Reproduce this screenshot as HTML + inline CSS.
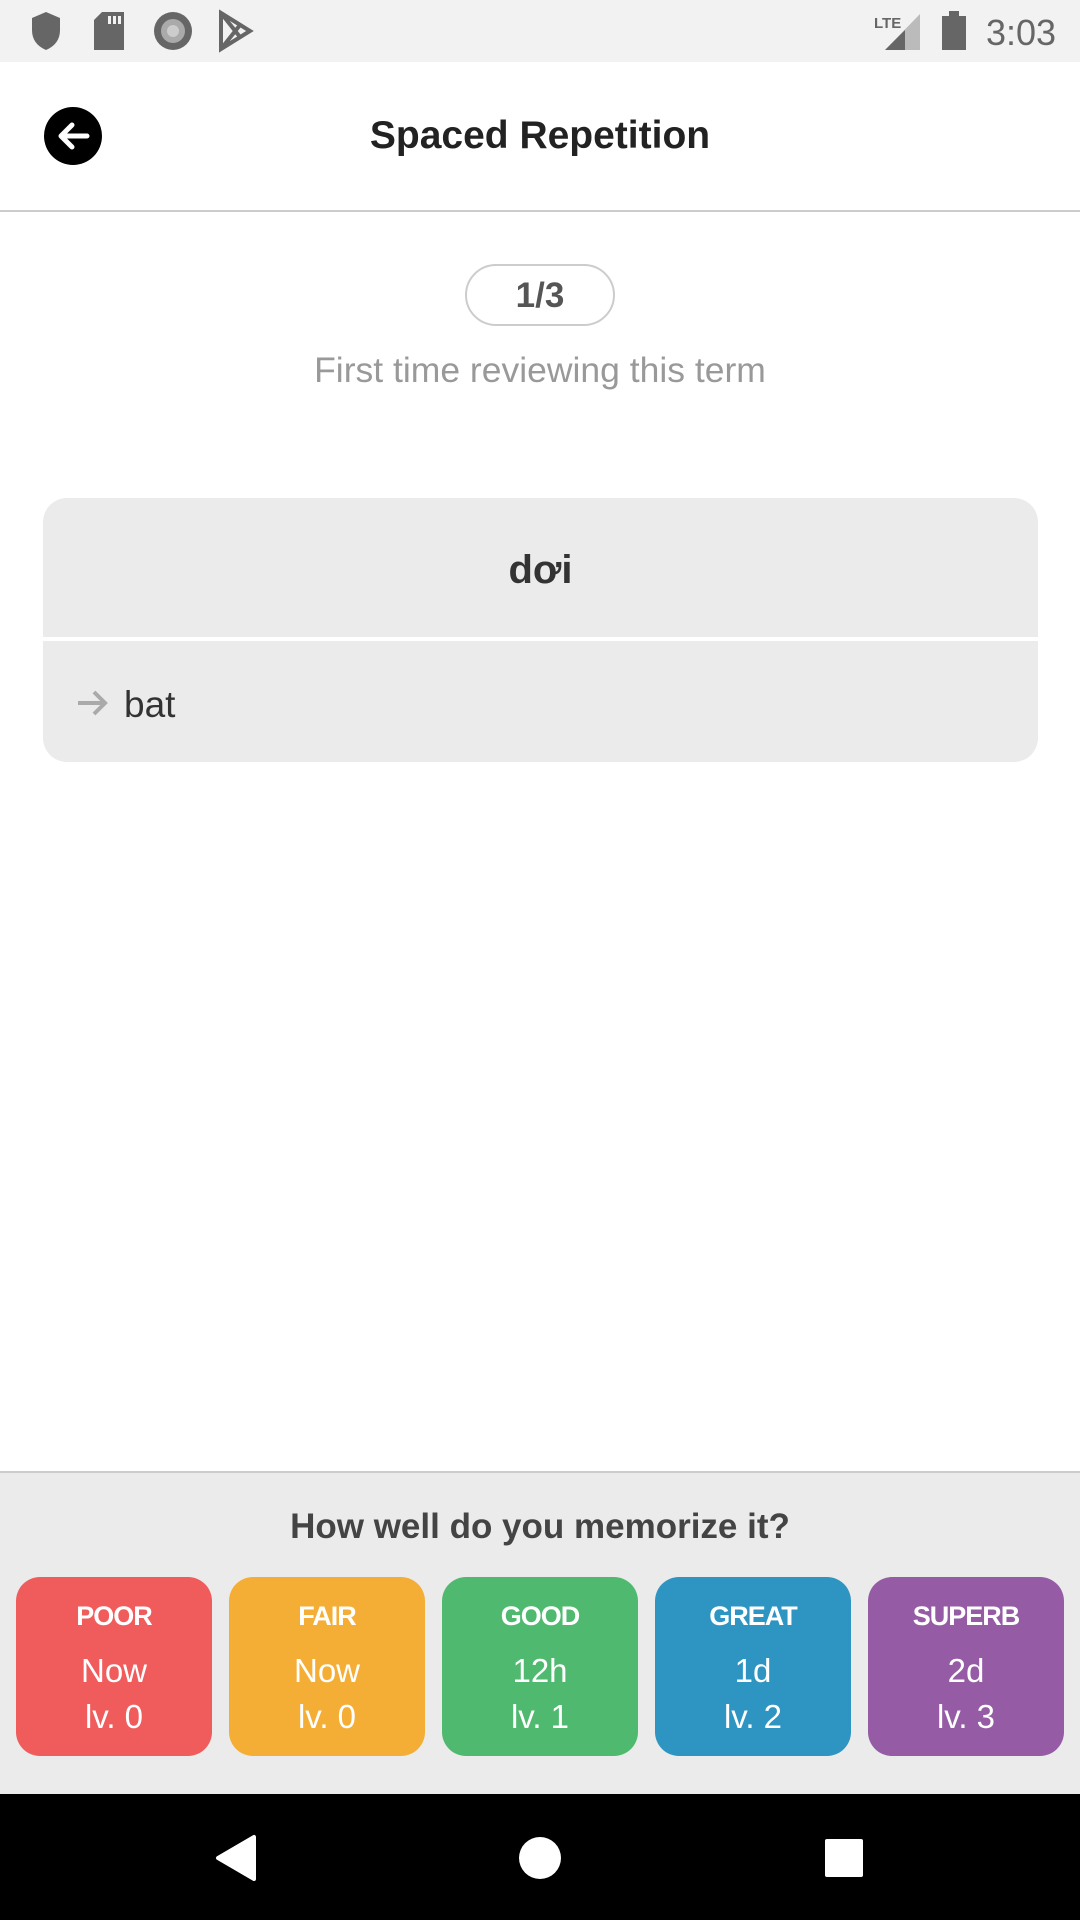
<!DOCTYPE html>
<html><head><meta charset="utf-8"><style>
*{margin:0;padding:0;box-sizing:border-box}
body{width:1080px;height:1920px;position:relative;background:#fff;font-family:"Liberation Sans",Roboto,sans-serif;overflow:hidden}
.abs{position:absolute}
.btn{position:absolute;top:1577px;width:196px;height:179px;border-radius:24px;color:#fff;text-align:center}
.btn .l{position:absolute;top:24px;width:100%;font-weight:bold;font-size:27px;letter-spacing:-1px}
.btn .v{position:absolute;top:75px;width:100%;font-size:33px}
.btn .w{position:absolute;top:121px;width:100%;font-size:33px}
</style></head><body>
<div class="abs" style="left:0;top:0;width:1080px;height:62px;background:#f2f2f2"></div>
<svg class="abs" style="left:0;top:0" width="1080" height="62">
<path d="M32 18 L46 12 L60 18 L60 30 Q60 44 46 50 Q32 44 32 30Z" fill="#666"/>
<path d="M102 12 L124 12 L124 50 L94 50 L94 20Z" fill="#666"/>
<rect x="108" y="16" width="3" height="8" fill="#f2f2f2"/><rect x="113" y="16" width="3" height="8" fill="#f2f2f2"/><rect x="118" y="16" width="3" height="8" fill="#f2f2f2"/>
<circle cx="173" cy="31" r="19" fill="#666"/><circle cx="173" cy="31" r="12" fill="#aaa"/><circle cx="173" cy="31" r="6" fill="#ccc"/>
<path d="M221 13 L250 31 L221 49Z M221 13 L240 37 M221 49 L240 25" fill="none" stroke="#666" stroke-width="4"/>
<path d="M885 50 L920 14 L920 50Z" fill="#bbb"/><path d="M885 50 L905 30 L905 50Z" fill="#666"/>
<text x="874" y="28" font-size="15" font-weight="bold" fill="#666">LTE</text>
<rect x="942" y="16" width="24" height="34" fill="#666"/><rect x="949" y="11" width="10" height="6" fill="#666"/>
<text x="986" y="45" font-size="36" fill="#666">3:03</text>
</svg>
<div class="abs" style="left:0;top:210px;width:1080px;height:2px;background:#ccc"></div>
<svg class="abs" style="left:44px;top:107px" width="58" height="58"><circle cx="29" cy="29" r="29" fill="#000"/><path d="M43 29 H17 M28 18 L17 29 L28 40" stroke="#fff" stroke-width="5" fill="none" stroke-linecap="round" stroke-linejoin="round"/></svg>
<div class="abs" style="left:0;top:114px;width:1080px;text-align:center;font-weight:bold;font-size:39px;color:#222">Spaced Repetition</div>
<div class="abs" style="left:465px;top:264px;width:150px;height:62px;border:2px solid #ccc;border-radius:31px;text-align:center;line-height:60px;font-weight:bold;font-size:35px;color:#555">1/3</div>
<div class="abs" style="left:0;top:350px;width:1080px;text-align:center;font-size:35.5px;color:#999">First time reviewing this term</div>
<div class="abs" style="left:43px;top:498px;width:995px;height:264px;border-radius:24px;background:#ebebeb;overflow:hidden">
<div class="abs" style="left:0;top:139px;width:995px;height:4px;background:#fff"></div>
<div class="abs" style="left:0;top:50px;width:995px;text-align:center;font-weight:bold;font-size:40px;color:#333">dơi</div>
<svg class="abs" style="left:32px;top:190px" width="36" height="30"><path d="M3 15 H30 M19 4 L30 15 L19 26" stroke="#aaa" stroke-width="4" fill="none"/></svg>
<div class="abs" style="left:81px;top:186px;font-size:37px;color:#333">bat</div>
</div>
<div class="abs" style="left:0;top:1471px;width:1080px;height:323px;background:#ebebeb;border-top:2px solid #ccc"></div>
<div class="abs" style="left:0;top:1507px;width:1080px;text-align:center;font-weight:bold;font-size:35px;color:#444">How well do you memorize it?</div>
<div class="btn" style="left:16px;background:#f05c5c"><div class="l">POOR</div><div class="v">Now</div><div class="w">lv. 0</div></div>
<div class="btn" style="left:229px;background:#f4ae36"><div class="l">FAIR</div><div class="v">Now</div><div class="w">lv. 0</div></div>
<div class="btn" style="left:442px;background:#4fba6f"><div class="l">GOOD</div><div class="v">12h</div><div class="w">lv. 1</div></div>
<div class="btn" style="left:655px;background:#2e95c2"><div class="l">GREAT</div><div class="v">1d</div><div class="w">lv. 2</div></div>
<div class="btn" style="left:868px;background:#955ca5"><div class="l">SUPERB</div><div class="v">2d</div><div class="w">lv. 3</div></div>
<div class="abs" style="left:0;top:1794px;width:1080px;height:126px;background:#000"></div>
<svg class="abs" style="left:0;top:1794px" width="1080" height="126">
<path d="M254 43 L254 85 L218 64Z" fill="#fff" stroke="#fff" stroke-width="4" stroke-linejoin="round"/>
<circle cx="540" cy="64" r="21" fill="#fff"/>
<rect x="825" y="45" width="38" height="38" rx="2" fill="#fff"/>
</svg>
</body></html>
